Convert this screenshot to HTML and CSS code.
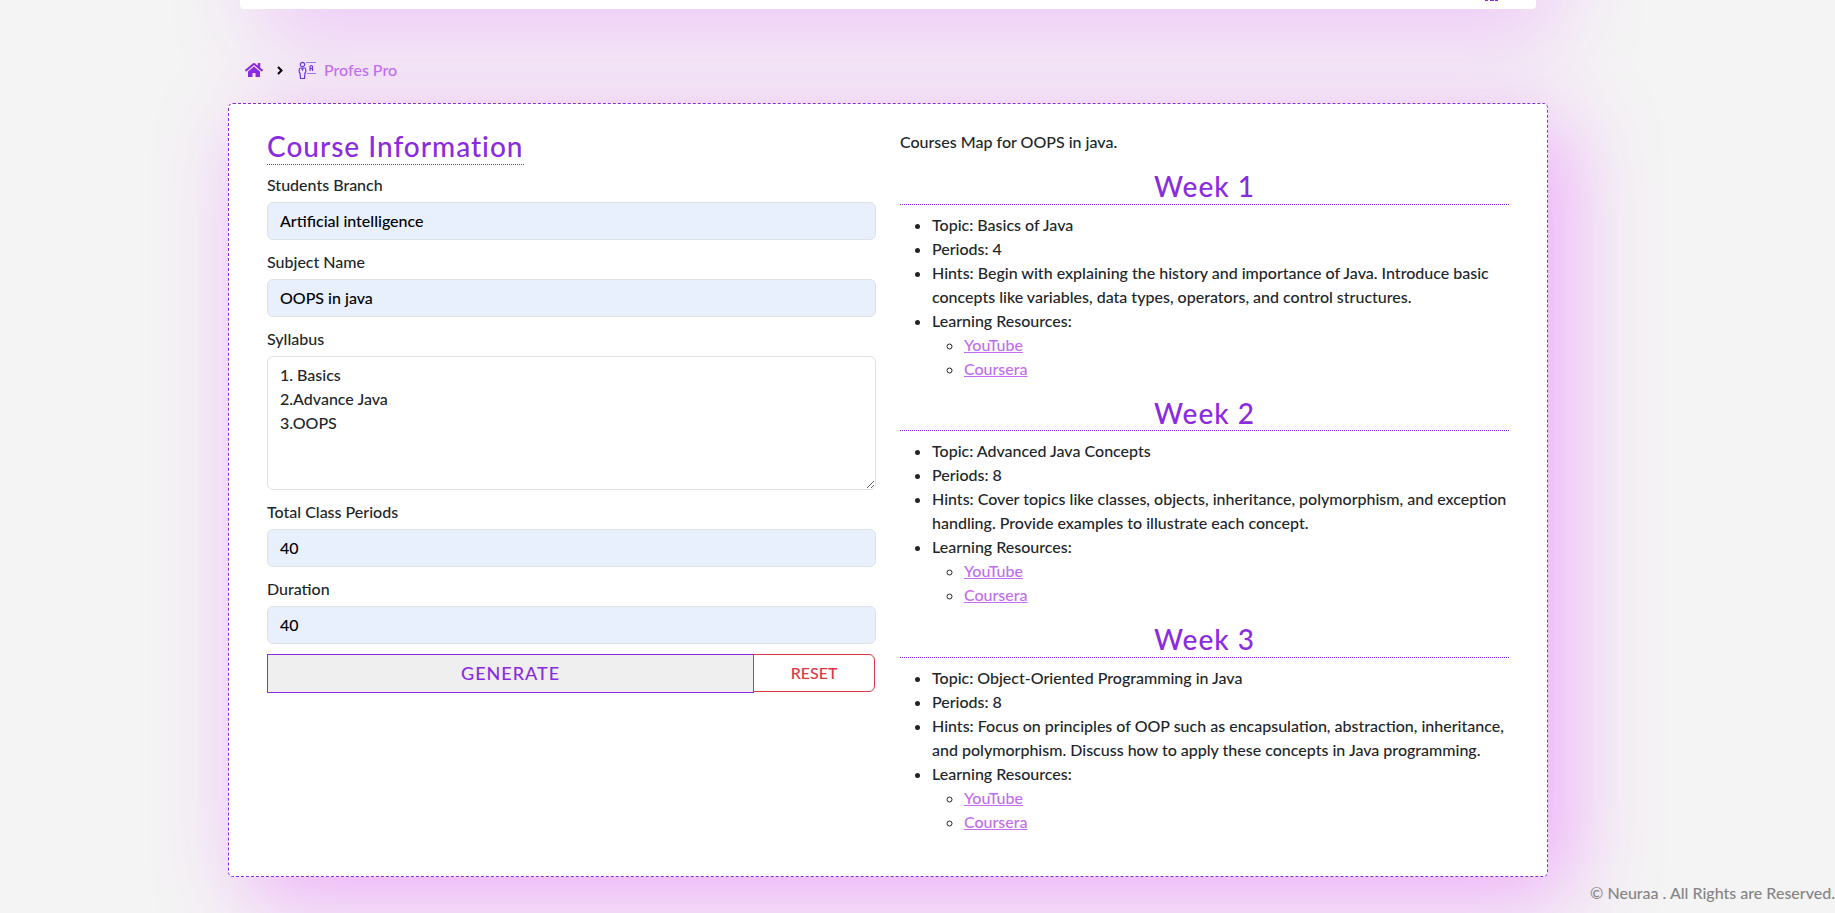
FILE: index.html
```html
<!DOCTYPE html>
<html lang="en">
<head>
    <meta charset="UTF-8">
    <meta name="viewport" content="width=device-width, initial-scale=1.0">
    <title>Profes Pro</title>
    <link rel="stylesheet" href="styles.css">
</head>
<body>
    <div class="page">
        <header class="topbar">
            <svg class="topbar-icon" viewBox="0 0 16 16" width="16" height="16" aria-hidden="true">
                <circle cx="8" cy="5" r="4"/>
                <path d="M1 15h3v1H1zM6 15h4v1H6zM11 15h3v1h-3z"/>
            </svg>
        </header>

        <nav class="breadcrumb">
            <a href="#" class="home" aria-label="Home">
                <svg viewBox="0 0 576 512" width="18" height="16" aria-hidden="true">
                    <path d="M280.4 148.3L96 300.1V464a16 16 0 0 0 16 16l112-.3a16 16 0 0 0 16-16V368a16 16 0 0 1 16-16h64a16 16 0 0 1 16 16v95.6a16 16 0 0 0 16 16.1L464 480a16 16 0 0 0 16-16V300L295.700 148.300a12.200 12.200 0 0 0-15.300 0zM571.600 251.500L488 182.600V44a12 12 0 0 0-12-12h-56a12 12 0 0 0-12 12v72.600L318.500 43a48 48 0 0 0-61 0L4.300 251.500a12 12 0 0 0-1.600 16.900l25.500 31a12 12 0 0 0 16.900 1.600L280.400 107.200a12.200 12.200 0 0 1 15.300 0L531 301a12 12 0 0 0 16.900-1.600l25.500-31a12 12 0 0 0-1.800-16.900z"/>
                </svg>
            </a>
            <svg class="chevron" viewBox="0 0 6 9" width="6" height="9" aria-hidden="true">
                <path d="M1 1l3.500 3.500L1 8"/>
            </svg>
            <a href="#" class="current">
                <svg class="teacher" viewBox="0 0 18 18" width="18" height="18" aria-hidden="true">
                    <circle cx="4.500" cy="3.500" r="2.200"/>
                    <path d="M2.500 6.500C.8 8 .8 11 2 12.500M6.500 6.500C8.200 8 8.200 11 7 12.500M3.500 6.500l1 2.500 1-2.500M2 11.500l.5 6h4l.5-6"/>
                    <path class="board" d="M8 1.500h10M9 12.500h9"/>
                    <path d="M12 10V5.500q0-1 1.200-1t1.300 1V10M12 7.500h2.500"/>
                </svg>
                Profes Pro
            </a>
        </nav>

        <main class="card">
            <form class="course-form">
                <h3 class="title">Course Information</h3>

                <label for="branch">Students Branch</label>
                <input type="text" id="branch" class="filled" value="Artificial intelligence">

                <label for="subject">Subject Name</label>
                <input type="text" id="subject" class="filled" value="OOPS in java">

                <label for="syllabus">Syllabus</label>
                <textarea id="syllabus" rows="5">1. Basics
2.Advance Java
3.OOPS</textarea>

                <label for="periods">Total Class Periods</label>
                <input type="text" id="periods" class="filled" value="40">

                <label for="duration">Duration</label>
                <input type="text" id="duration" class="filled" value="40">

                <div class="buttons">
                    <button type="button" class="generate">GENERATE</button>
                    <button type="reset" class="reset">RESET</button>
                </div>
            </form>

            <section class="course-map">
                <p>Courses Map for OOPS in java.</p>

                <h3 class="week">Week 1</h3>
                <ul>
                    <li>Topic: Basics of Java</li>
                    <li>Periods: 4</li>
                    <li>Hints: Begin with explaining the history and importance of Java. Introduce basic concepts like variables, data types, operators, and control structures.</li>
                    <li>Learning Resources:
                        <ul>
                            <li><a href="#">YouTube</a></li>
                            <li><a href="#">Coursera</a></li>
                        </ul>
                    </li>
                </ul>

                <h3 class="week">Week 2</h3>
                <ul>
                    <li>Topic: Advanced Java Concepts</li>
                    <li>Periods: 8</li>
                    <li>Hints: Cover topics like classes, objects, inheritance, polymorphism, and exception handling. Provide examples to illustrate each concept.</li>
                    <li>Learning Resources:
                        <ul>
                            <li><a href="#">YouTube</a></li>
                            <li><a href="#">Coursera</a></li>
                        </ul>
                    </li>
                </ul>

                <h3 class="week">Week 3</h3>
                <ul>
                    <li>Topic: Object-Oriented Programming in Java</li>
                    <li>Periods: 8</li>
                    <li>Hints: Focus on principles of OOP such as encapsulation, abstraction, inheritance, and polymorphism. Discuss how to apply these concepts in Java programming.</li>
                    <li>Learning Resources:
                        <ul>
                            <li><a href="#">YouTube</a></li>
                            <li><a href="#">Coursera</a></li>
                        </ul>
                    </li>
                </ul>
            </section>
        </main>
    </div>

    <footer>© Neuraa . All Rights are Reserved.</footer>
</body>
</html>
```

FILE: styles.css
```css
* {
    box-sizing: border-box;
}

body {
    min-height: 100vh;
    margin: 0;
    font-family: Lato, sans-serif;
    font-size: 16px;
    font-weight: 500;
    line-height: 24px;
    color: #212529;
    background-color: #f4f4f4;
}

a {
    color: #c26df0;
}

/* room on the right for the side bar */
.page {
    padding-right: 59px;
}

/* the bar is scrolled almost out of view */
.topbar {
    display: flex;
    align-items: flex-end;
    justify-content: flex-end;
    max-width: 1296px;
    height: 80px;
    margin: -71px auto 0;
    padding: 0 36px 8px;
    background-color: #fff;
    border-radius: 4px;
    box-shadow: 20px 20px 90px #eebcfa;
}

.topbar-icon {
    fill: #8a2be2;
}

.breadcrumb {
    display: flex;
    align-items: center;
    max-width: 1320px;
    margin: 49px auto 21px;
    padding-left: 17px;
}

.home {
    display: flex;
    fill: #8a2be2;
}

.chevron {
    margin: 0 15px 0 14px;
    fill: none;
    stroke: #000;
    stroke-width: 2;
}

.current {
    display: flex;
    align-items: center;
    gap: 8px;
    text-decoration: none;
}

.teacher {
    fill: none;
    stroke: #6a35e0;
    stroke-width: 1.2;
}

.board {
    stroke: #9a78ea;
}

.card {
    display: grid;
    grid-template-columns: 1fr 1fr;
    gap: 24px;
    max-width: 1320px;
    margin: 0 auto;
    padding: 26px 38px;
    background-color: #fff;
    border: 1px dashed #8a2be2;
    border-radius: 5px;
    box-shadow: 20px 20px 90px #eea8fa;
}

.title, .week {
    margin: 0 0 8px;
    font-size: 28px;
    font-weight: 500;
    line-height: 1.2;
    letter-spacing: 1px;
    color: #8a2be2;
    border-bottom: 1px dotted #8a2be2;
}

.title {
    width: fit-content;
}

.week {
    text-align: center;
}

label {
    display: block;
    margin-bottom: 5px;
}

input, textarea {
    display: block;
    width: 100%;
    margin-bottom: 10px;
    padding: 6px 12px;
    font: inherit;
    color: #212529;
    background-color: #fff;
    border: 1px solid #dee2e6;
    border-radius: 6px;
}

.filled {
    color: #000;
    background-color: #e8f0fe;
}

.buttons {
    display: flex;
    align-items: flex-start;
}

.generate {
    width: 80%;
    height: 39px;
    font-family: inherit;
    font-size: 18px;
    font-weight: 500;
    letter-spacing: 1px;
    color: #8a2be2;
    background-color: #efefef;
    border: 1px solid #8a2be2;
}

.reset {
    width: 20%;
    height: 38px;
    margin-left: -1px;
    font: inherit;
    color: #dc3545;
    background-color: #fff;
    border: 1px solid #dc3545;
    border-radius: 0 6px 6px 0;
}

.course-map p {
    margin: 0 0 16px;
}

.course-map ul {
    margin: 0 0 16px;
    padding-left: 32px;
}

.course-map ul ul {
    margin-bottom: 0;
}

footer {
    margin-top: 4px;
    text-align: right;
    color: #858585;
}
```
